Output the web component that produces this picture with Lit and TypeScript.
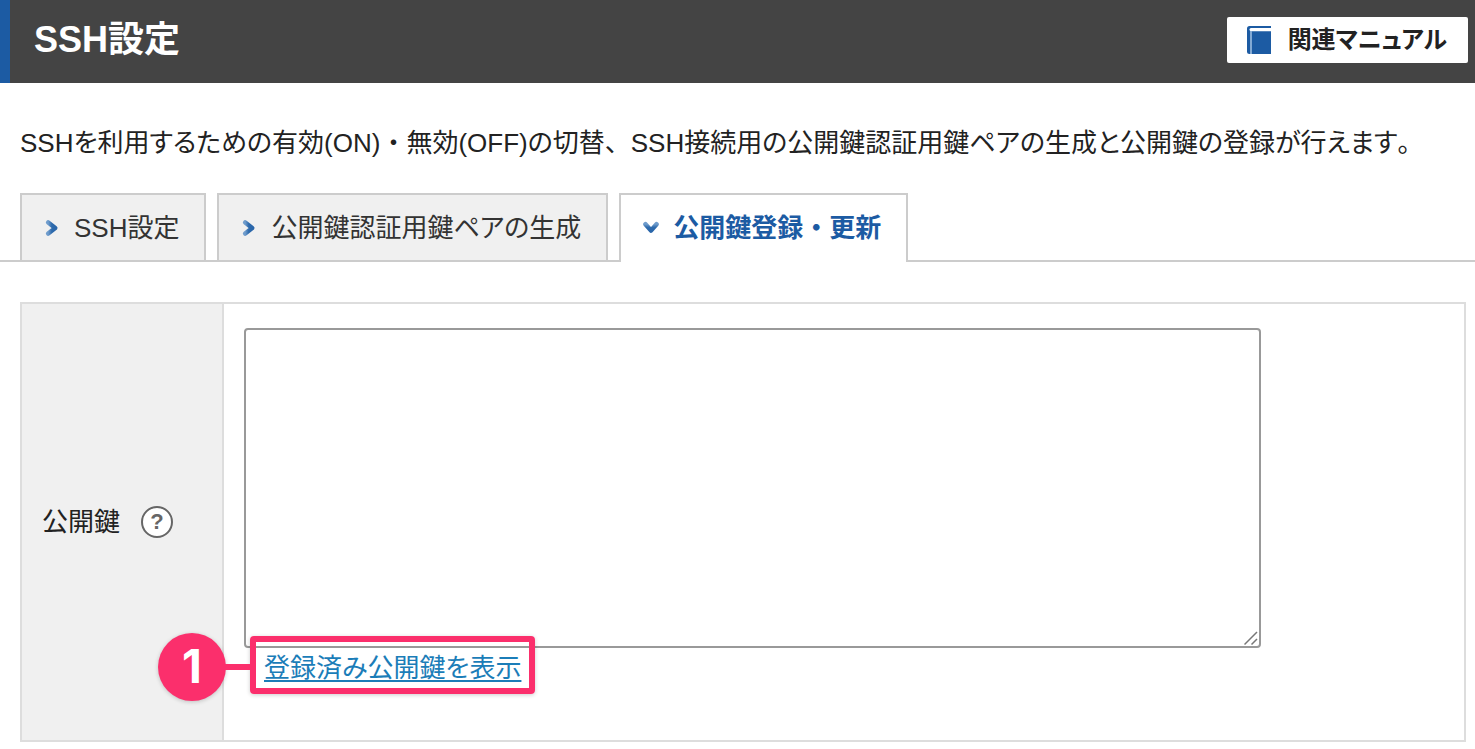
import { LitElement, html, css, svg } from "lit";
import { customElement, state } from "lit/decorators.js";

interface Tab {
  id: string;
  label: string;
}

const TABS: Tab[] = [
  { id: "settings", label: "SSH設定" },
  { id: "generate", label: "公開鍵認証用鍵ペアの生成" },
  { id: "register", label: "公開鍵登録・更新" },
];

const LEAD =
  "SSHを利用するための有効(ON)・無効(OFF)の切替、SSH接続用の公開鍵認証用鍵ペアの生成と公開鍵の登録が行えます。";

// Kana are set proportionally, while punctuation keeps its full width.
const typeset = (text: string) =>
  text
    .split(/([・、。])/)
    .filter(Boolean)
    .map((part) => (/^[・、。]$/.test(part) ? html`<span class="mark">${part}</span>` : part));

const chevronRight = svg`
  <svg class="chevron" width="16" height="18" viewBox="0 0 16 18" aria-hidden="true">
    <defs>
      <linearGradient id="r" x1="0" x2="1"><stop offset="0" stop-color="#6f9ccc"/><stop offset="0.5" stop-color="#2f6bad"/><stop offset="1" stop-color="#2a66aa"/></linearGradient>
    </defs>
    <path d="M4.200 3.500L11.200 9L4.200 14.500" stroke="url(#r)" stroke-width="4.600" stroke-linecap="round" stroke-linejoin="round" fill="none"/>
  </svg>`;

const chevronDown = svg`
  <svg class="chevron" width="16" height="18" viewBox="0 0 16 18" aria-hidden="true">
    <defs>
      <linearGradient id="d" x1="0" x2="0" y1="0" y2="1"><stop offset="0" stop-color="#6f9ccc"/><stop offset="0.500" stop-color="#2f6bad"/><stop offset="1" stop-color="#2a66aa"/></linearGradient>
    </defs>
    <path d="M2.500 5.200L8 11.500L13.500 5.200" stroke="url(#d)" stroke-width="4.600" stroke-linecap="round" stroke-linejoin="round" fill="none"/>
  </svg>`;

const book = svg`
  <svg width="24" height="28" viewBox="0 0 24 28" aria-hidden="true">
    <path d="M2.500 0H24V28H2.500Q0 28 0 25.500V2.500Q0 0 2.500 0Z" fill="#1c5ba3"/>
    <path d="M4 2H24V5.300H4Q2.500 5.300 2.500 3.600Q2.500 2 4 2Z" fill="#fff"/>
    <path d="M4 5V28" stroke="#8fb3da" stroke-width="1.800"/>
  </svg>`;

@customElement("app-root")
export class AppRoot extends LitElement {
  @state() private active = "register";

  static styles = css`
    :host {
      display: block;
      background: #fff;
      color: #222;
      font-family: "Liberation Sans", "Noto Sans CJK JP", sans-serif;
      font-size: 26px;
      font-weight: 400;
      line-height: 40px;
      font-feature-settings: "palt";
    }
    * {
      box-sizing: border-box;
    }
    .mark {
      font-feature-settings: normal;
    }
    .header {
      display: flex;
      align-items: center;
      justify-content: space-between;
      padding: 17px 7px 20px 24px;
      border-left: 10px solid #1c5ba3;
      background: #444;
    }
    .title {
      margin: 0;
      color: #fff;
      font-size: 36px;
      line-height: 46px;
    }
    .manual {
      display: flex;
      align-items: center;
      gap: 17px;
      height: 46px;
      padding: 0 21px 0 20px;
      border-radius: 2px;
      background: #fff;
      color: #222;
      font-size: 24px;
      font-weight: 700;
      text-decoration: none;
    }
    .lead {
      margin: 40px 20px 30px;
    }
    .tabs {
      display: flex;
      gap: 11px;
      padding: 0 20px;
      border-bottom: 2px solid #ccc;
    }
    .tab {
      display: flex;
      align-items: center;
      gap: 14px;
      height: 67px;
      padding: 0 25px 0 22px;
      border: 2px solid #ccc;
      border-bottom: 0;
      background: #f0f0f0;
      color: #333;
      text-decoration: none;
    }
    .tab.active {
      height: 69px;
      margin-bottom: -2px;
      padding-bottom: 2px;
      background: #fff;
      color: #1c5ba3;
      font-weight: 700;
    }
    .form {
      padding: 40px 9px 7px 20px;
    }
    .table {
      width: 100%;
      border: 2px solid #ddd;
      border-spacing: 0;
    }
    .name {
      width: 202px;
      padding: 0 20px;
      border-right: 2px solid #ddd;
      background: #f0f0f0;
      font-weight: 400;
      text-align: left;
    }
    .name-row {
      display: flex;
      align-items: center;
      gap: 21px;
    }
    .help {
      width: 32px;
      height: 32px;
      padding: 0;
      border: 2px solid #666;
      border-radius: 50%;
      background: #fff;
      color: #666;
      font: 700 22px/28px "Liberation Sans", sans-serif;
    }
    .value {
      padding: 24px 24px 52px 20px;
    }
    .key {
      display: block;
      width: 85%;
      height: 320px;
      padding: 8px;
      border: 2px solid #999;
      border-radius: 4px;
      background: #fff;
      font: inherit;
      outline: none;
      resize: both;
    }
    .key::-webkit-resizer {
      background: url("data:image/svg+xml,%3Csvg xmlns='http://www.w3.org/2000/svg' width='15' height='15'%3E%3Cpath d='M0.500 13.500L13 1M7.500 13.500L13 8' stroke='%23777' stroke-width='1.500' fill='none'/%3E%3C/svg%3E") no-repeat right bottom;
    }
    .callout {
      position: relative;
      display: inline-block;
      margin-left: 20px;
    }
    .callout::before {
      content: "";
      position: absolute;
      inset: -12px -14px -6px;
      border: 6px solid #fb2f6c;
      border-radius: 4px;
      box-shadow: 0 1px 4px rgba(0, 0, 0, 0.2);
      pointer-events: none;
    }
    .callout::after {
      content: "";
      position: absolute;
      top: 16px;
      right: calc(100% + 14px);
      width: 26px;
      height: 6px;
      background: #fb2f6c;
    }
    .step {
      position: absolute;
      top: -15px;
      right: calc(100% + 38px);
      width: 68px;
      height: 68px;
      border-radius: 50%;
      background: #fb2f6c;
      box-shadow: 0 1px 4px rgba(0, 0, 0, 0.2);
      color: #fff;
      font: 700 46px/66px Inter, sans-serif;
      text-align: center;
    }
    .show {
      color: #1b7db8;
      text-decoration: underline;
      text-decoration-thickness: 2px;
      text-underline-offset: 3px;
      text-decoration-skip-ink: none;
    }
  `;

  private select(e: Event, id: string) {
    e.preventDefault();
    this.active = id;
  }

  render() {
    return html`
      <header class="header">
        <h1 class="title">SSH設定</h1>
        <a class="manual" href="#manual">${book}<span>関連マニュアル</span></a>
      </header>
      <main>
        <p class="lead">${typeset(LEAD)}</p>
        <nav class="tabs">
          ${TABS.map((t) => {
            const on = t.id === this.active;
            return html`<a
              class="tab ${on ? "active" : ""}"
              href="#${t.id}"
              @click=${(e: Event) => this.select(e, t.id)}
              >${on ? chevronDown : chevronRight}<span>${typeset(t.label)}</span></a
            >`;
          })}
        </nav>
        <form class="form">
          <table class="table">
            <tbody>
              <tr>
                <th class="name" scope="row">
                  <div class="name-row">
                    <label for="key">公開鍵</label>
                    <button class="help" type="button">?</button>
                  </div>
                </th>
                <td class="value">
                  <textarea class="key" id="key"></textarea>
                  <div class="callout">
                    <span class="step">1</span>
                    <a class="show" href="#registered">登録済み公開鍵を表示</a>
                  </div>
                </td>
              </tr>
            </tbody>
          </table>
        </form>
      </main>
    `;
  }
}
